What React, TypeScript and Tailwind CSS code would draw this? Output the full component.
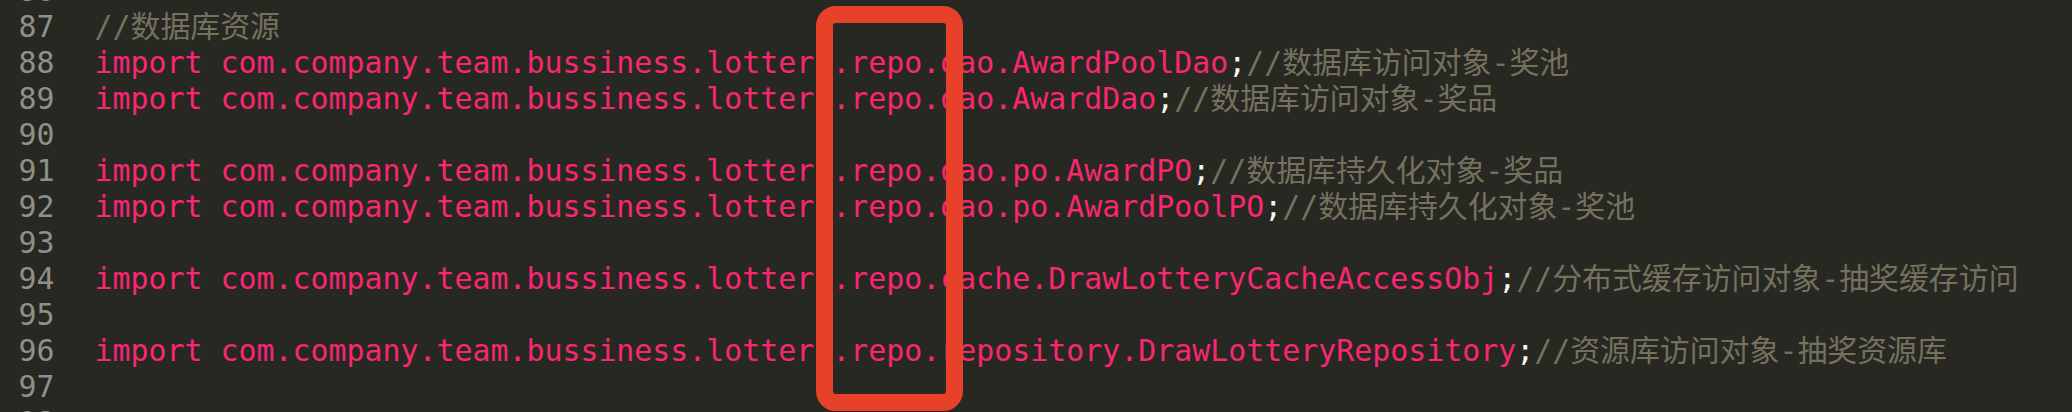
import React from 'react';

type Line = { n: number; code?: string; comment?: string };

const pkg = 'import com.company.team.bussiness.lottery.repo.';

const lines: Line[] = [
  { n: 86 },
  { n: 87, comment: '//数据库资源' },
  { n: 88, code: pkg + 'dao.AwardPoolDao', comment: '//数据库访问对象-奖池' },
  { n: 89, code: pkg + 'dao.AwardDao', comment: '//数据库访问对象-奖品' },
  { n: 90 },
  { n: 91, code: pkg + 'dao.po.AwardPO', comment: '//数据库持久化对象-奖品' },
  { n: 92, code: pkg + 'dao.po.AwardPoolPO', comment: '//数据库持久化对象-奖池' },
  { n: 93 },
  { n: 94, code: pkg + 'cache.DrawLotteryCacheAccessObj', comment: '//分布式缓存访问对象-抽奖缓存访问' },
  { n: 95 },
  { n: 96, code: pkg + 'repository.DrawLotteryRepository', comment: '//资源库访问对象-抽奖资源库' },
  { n: 97 },
  { n: 98 },
];

export default function App() {
  return (
    <div
      className="relative w-[2072px] h-[412px] overflow-hidden bg-[#272822] text-[29.9px] leading-[36px]"
      style={{ fontFamily: '"DejaVu Sans Mono", "Noto Sans CJK SC", monospace' }}
    >
      {/* editor lines */}
      <div className="-mt-[27px] flex flex-col">
        {lines.map((l) => (
          <div key={l.n} className="flex h-[36px] whitespace-pre">
            <span className="w-[94.5px] shrink-0 pr-[40px] text-right text-[#8f908a]">{l.n}</span>
            <span>
              {l.code && <span className="text-[#f92672]">{l.code}</span>}
              {l.code && <span className="text-[#f8f8f2]">;</span>}
              {l.comment && <span className="text-[#75715e]">{l.comment}</span>}
            </span>
          </div>
        ))}
      </div>

      {/* highlight annotation */}
      <div className="absolute left-[816px] top-[6px] w-[147px] h-[405px] border-[17px] border-[#e8412a] rounded-[20px]" />
    </div>
  );
}
